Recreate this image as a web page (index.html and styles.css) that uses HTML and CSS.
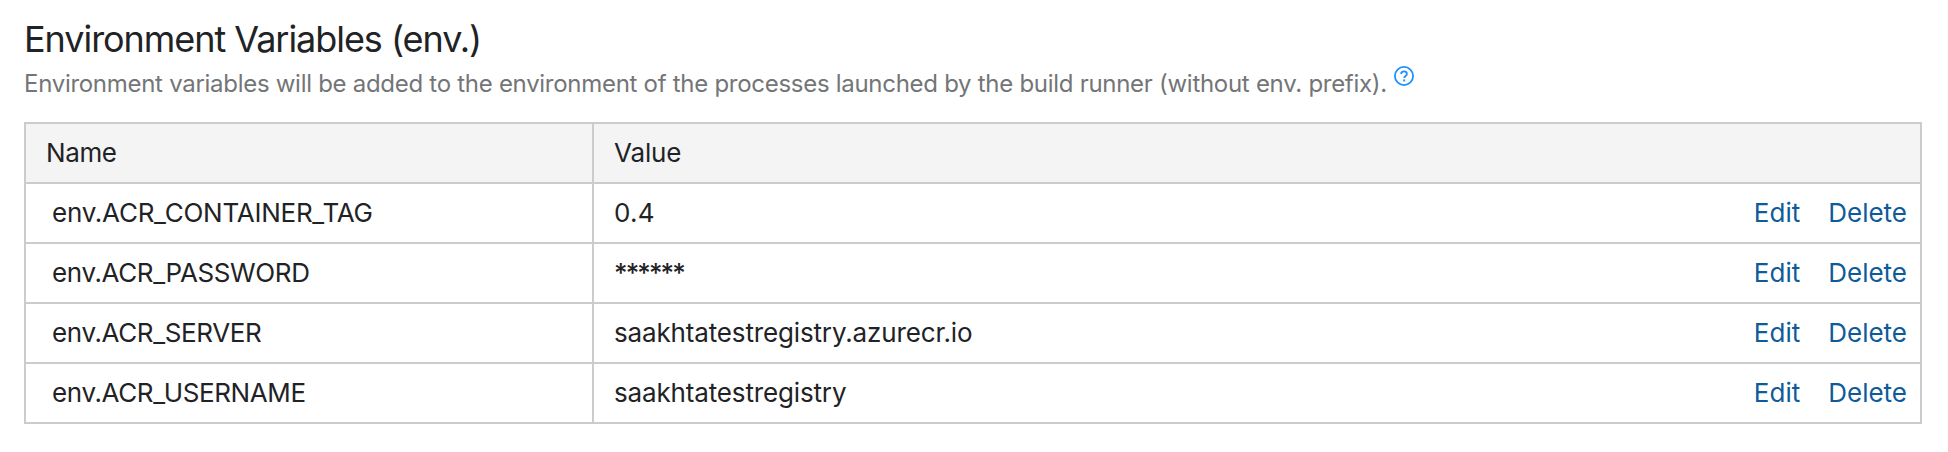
FILE: index.html
```html
<!DOCTYPE html>
<html lang="en">
<head>
<meta charset="utf-8">
<title>Environment Variables</title>
<link rel="stylesheet" href="styles.css">
</head>
<body>
<main class="section">
<h2 class="title">Environment Variables (env.)</h2>
<p class="note"><span>Environment variables will be added to the environment of the processes launched by the build runner (without env. prefix).</span>
<svg class="help" viewBox="0 0 20 20" fill="none" stroke="currentColor"><circle cx="10" cy="10" r="9.100" stroke-width="1.800"/><path d="M7.100 8C7.100 6.300 8.300 5.400 10 5.400s2.900 1 2.900 2.500c0 2.200-2.700 1.900-2.700 4.100" stroke-width="1.800"/><path d="M10.200 13.400v2" stroke-width="2"/></svg></p>
<table class="params">
<thead><tr><th class="name">Name</th><th class="value" colspan="2">Value</th></tr></thead>
<tbody>
<tr><td class="name tag">env.ACR_CONTAINER_TAG</td><td class="value number">0.4</td><td class="actions"><a>Edit</a><a>Delete</a></td></tr>
<tr><td class="name">env.ACR_PASSWORD</td><td class="value secret">******</td><td class="actions"><a>Edit</a><a>Delete</a></td></tr>
<tr><td class="name">env.ACR_SERVER</td><td class="value">saakhtatestregistry.azurecr.io</td><td class="actions"><a>Edit</a><a>Delete</a></td></tr>
<tr><td class="name">env.ACR_USERNAME</td><td class="value">saakhtatestregistry</td><td class="actions"><a>Edit</a><a>Delete</a></td></tr>
</tbody>
</table>
</main>
</body>
</html>
```

FILE: styles.css
```css
* { box-sizing: border-box; }
body { margin: 0; background: #fff; color: #1f2326; font-family: Inter, sans-serif; font-size: 26px; }
.section { padding: 15px 26px 0 24px; }
.title { margin: 0; font-size: 36px; font-weight: 400; line-height: 48px; height: 49px; letter-spacing: -1.05px; }
.note { margin: 0; display: flex; height: 58px; font-size: 24px; line-height: 40px; letter-spacing: -0.285px; color: #737577; white-space: nowrap; }
.help { width: 20px; height: 20px; margin: 2px 0 0 7px; color: #1e90ff; }
.params { width: 1898px; border-collapse: collapse; table-layout: fixed; border: 2px solid #ccc; }
.params tr { height: 60px; border-top: 2px solid #ccc; }
th { background: #f4f4f4; font-weight: 400; text-align: left; }
th, td { padding: 0 0 0 20px; line-height: 40px; }
.name { width: 568px; border-right: 2px solid #ccc; letter-spacing: -0.38px; }
td.name { padding-left: 26px; }
td.tag { letter-spacing: -0.25px; }
.value { letter-spacing: -0.15px; }
.number { letter-spacing: 0.3px; }
.secret { letter-spacing: -1.9px; font-weight: 500; }
.actions { width: 200px; padding: 0 13px 0 0; text-align: right; white-space: nowrap; color: #0f5b99; }
.actions a + a { margin-left: 28px; }
```
